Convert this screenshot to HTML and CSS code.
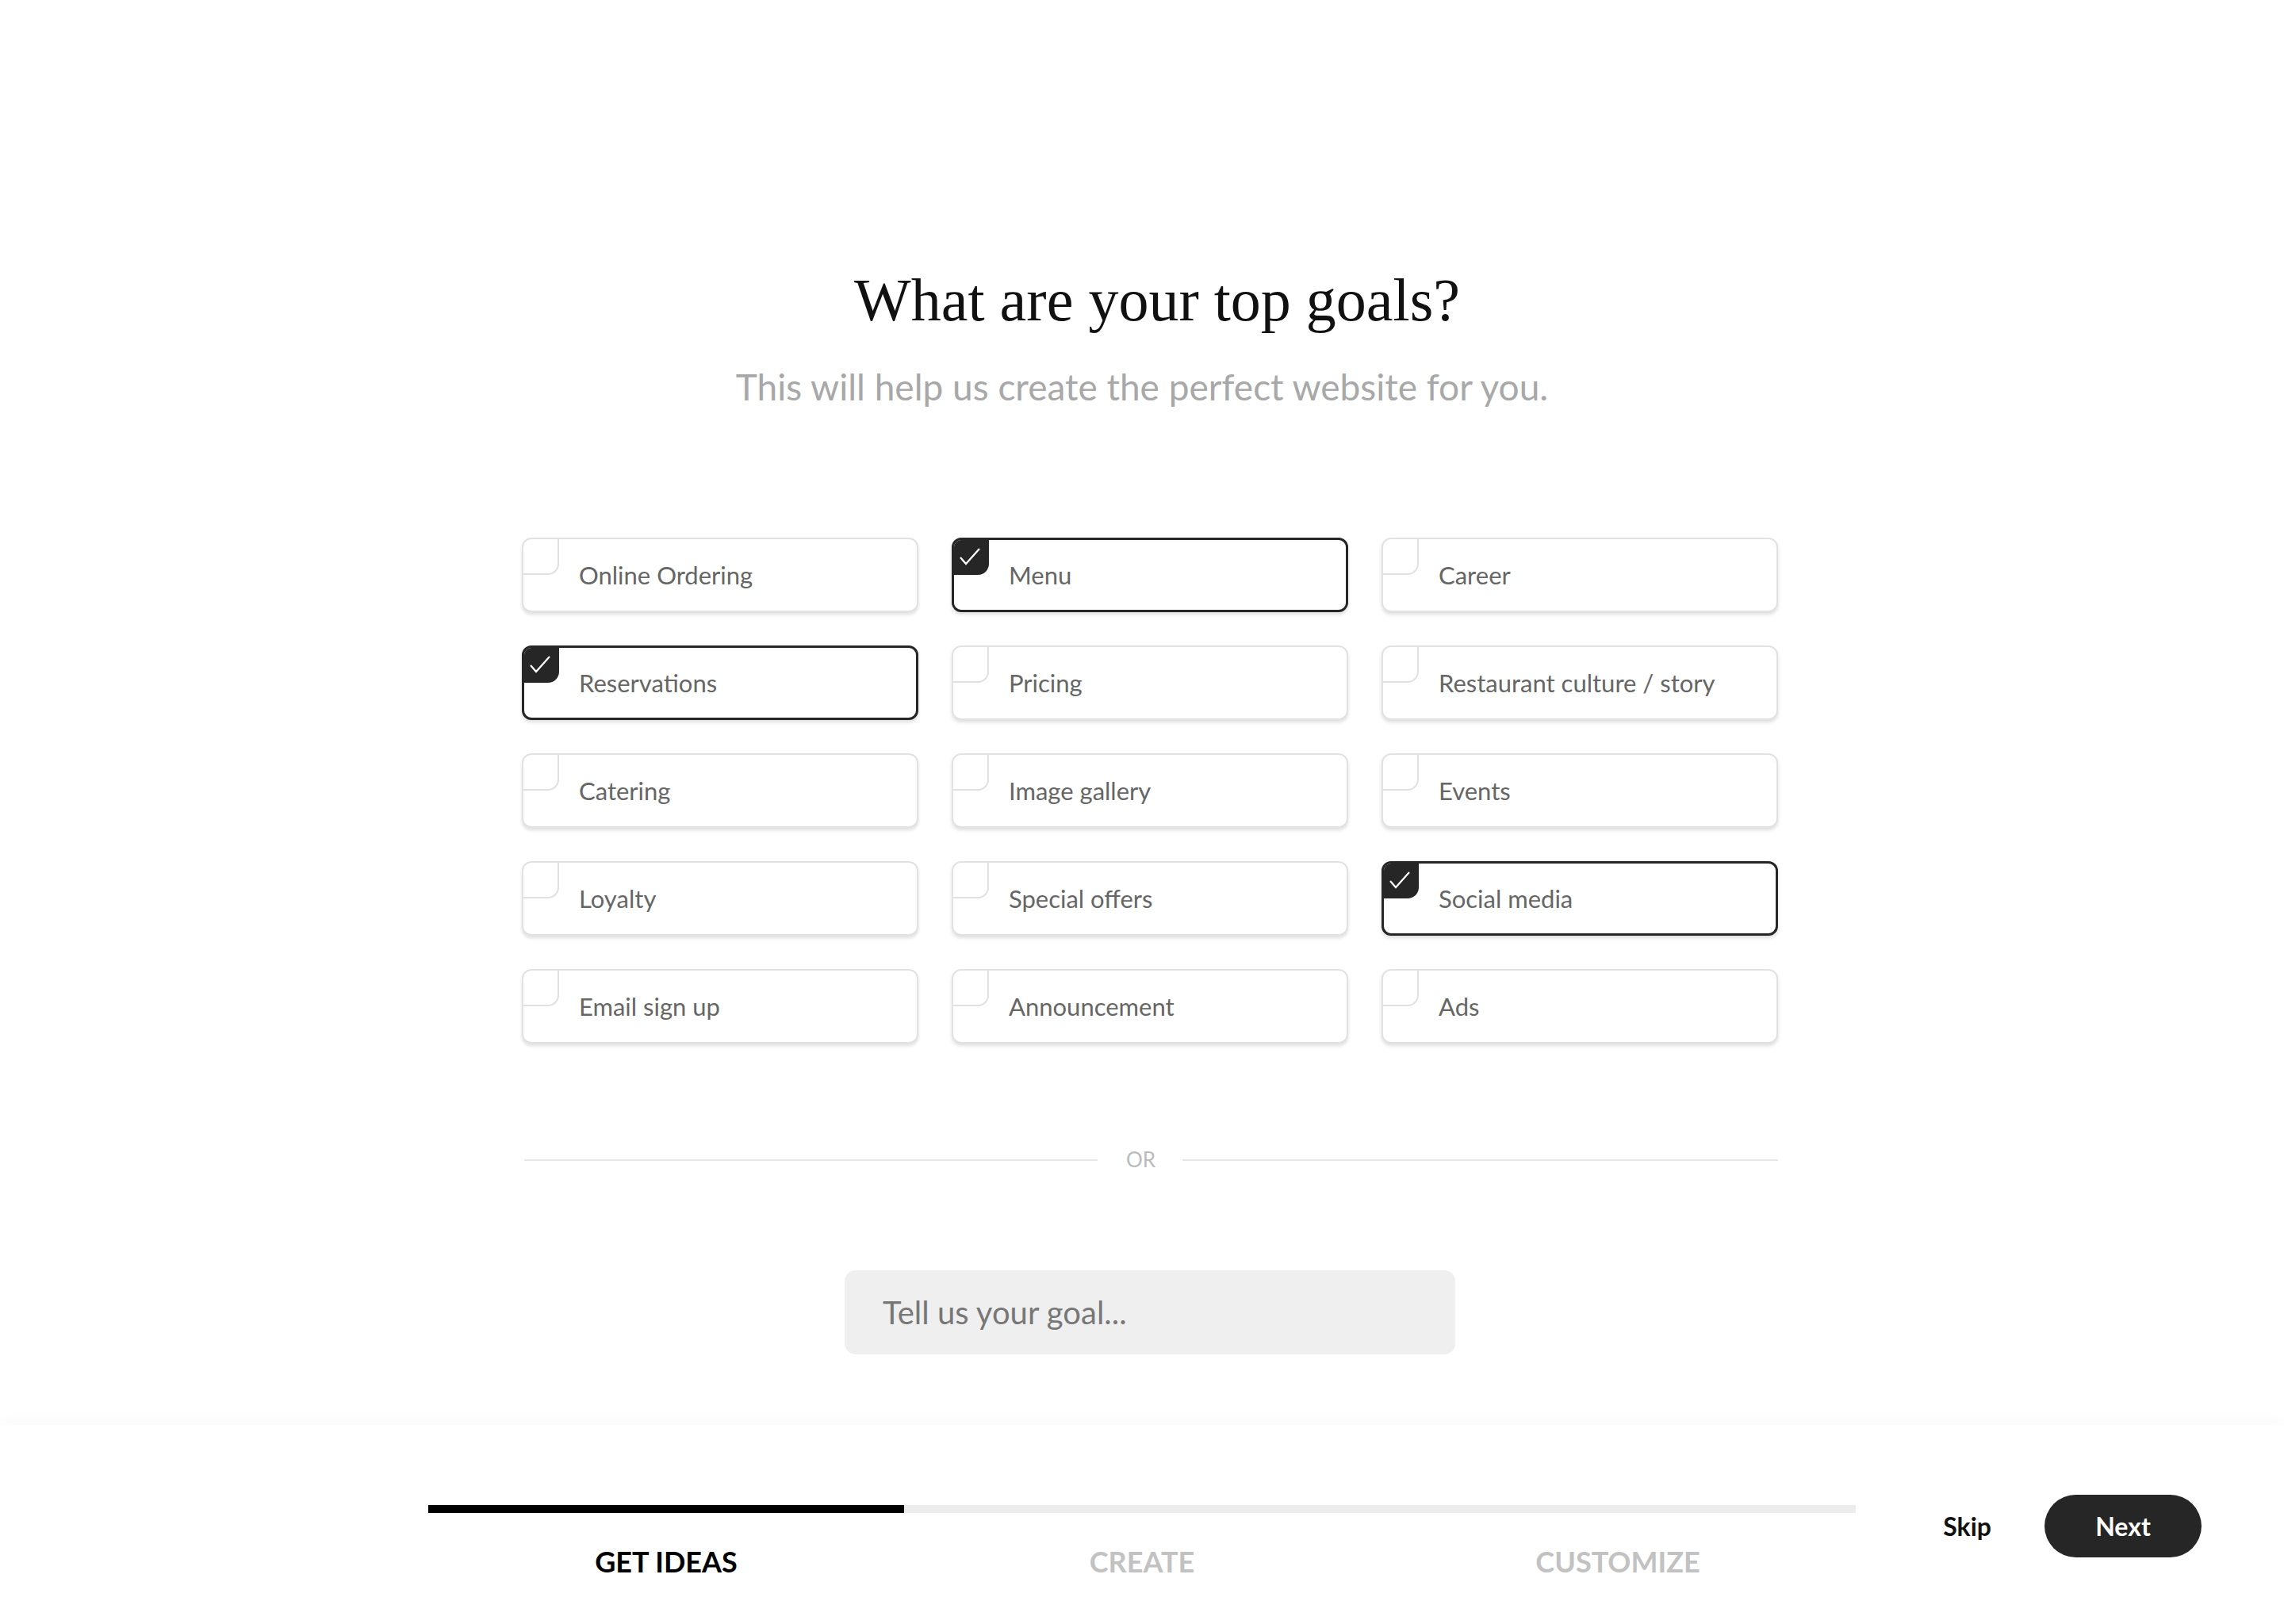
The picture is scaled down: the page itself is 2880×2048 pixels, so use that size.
FILE: index.html
```html
<!DOCTYPE html>
<html lang="en">
<head>
  <meta charset="UTF-8" />
  <meta name="viewport" content="width=device-width, initial-scale=1.0"/>
  <title>Top goals</title>
  <link rel="stylesheet" href="styles.css" />
</head>
<body>
  <main class="goals-page">
    <h1 class="goals-title">What are your top goals?</h1>
    <p class="goals-subtitle">This will help us create the perfect website for you.</p>

    <div class="goals-wrap">
      <div class="goals-grid">
        <label class="goal-card"><span class="goal-check"></span><span class="goal-label">Online Ordering</span></label>
        <label class="goal-card is-checked"><span class="goal-check"><svg viewBox="0 0 44 44"><path d="M8 22 L15 30 L32 11" /></svg></span><span class="goal-label">Menu</span></label>
        <label class="goal-card"><span class="goal-check"></span><span class="goal-label">Career</span></label>

        <label class="goal-card is-checked"><span class="goal-check"><svg viewBox="0 0 44 44"><path d="M8 22 L15 30 L32 11" /></svg></span><span class="goal-label">Reservations</span></label>
        <label class="goal-card"><span class="goal-check"></span><span class="goal-label">Pricing</span></label>
        <label class="goal-card"><span class="goal-check"></span><span class="goal-label">Restaurant culture / story</span></label>

        <label class="goal-card"><span class="goal-check"></span><span class="goal-label">Catering</span></label>
        <label class="goal-card"><span class="goal-check"></span><span class="goal-label">Image gallery</span></label>
        <label class="goal-card"><span class="goal-check"></span><span class="goal-label">Events</span></label>

        <label class="goal-card"><span class="goal-check"></span><span class="goal-label">Loyalty</span></label>
        <label class="goal-card"><span class="goal-check"></span><span class="goal-label">Special offers</span></label>
        <label class="goal-card is-checked"><span class="goal-check"><svg viewBox="0 0 44 44"><path d="M8 22 L15 30 L32 11" /></svg></span><span class="goal-label">Social media</span></label>

        <label class="goal-card"><span class="goal-check"></span><span class="goal-label">Email sign up</span></label>
        <label class="goal-card"><span class="goal-check"></span><span class="goal-label">Announcement</span></label>
        <label class="goal-card"><span class="goal-check"></span><span class="goal-label">Ads</span></label>
      </div>

      <div class="or-divider">
        <span class="or-line or-line-left"></span>
        <span class="or-text">OR</span>
        <span class="or-line"></span>
      </div>

      <input class="goal-input" type="text" placeholder="Tell us your goal..." />
    </div>
  </main>

  <footer class="steps-footer">
    <div></div>
    <div class="steps">
      <div class="steps-track"><div class="steps-fill"></div></div>
      <div class="steps-labels">
        <span class="step is-active">GET IDEAS</span>
        <span class="step">CREATE</span>
        <span class="step">CUSTOMIZE</span>
      </div>
    </div>
    <div class="steps-actions">
      <button type="button" class="skip-btn">Skip</button>
      <button type="button" class="next-btn">Next</button>
    </div>
  </footer>
</body>
</html>
```

FILE: styles.css
```css
/* Page */
body {
  margin: 0;
  min-height: 100vh;
  display: flex;
  flex-direction: column;
  font-family: Lato, "Noto Sans", sans-serif;
  background: #fff;
  color: #222;
}

.goals-page {
  flex: 1;
  padding-top: 333px;
  text-align: center;
}

.goals-title {
  margin: 0;
  padding-left: 38px; /* the heading sits a little right of centre */
  font-family: "Liberation Serif", "DejaVu Serif", serif;
  font-weight: normal;
  font-size: 76px;
  line-height: 1.2;
  color: #111;
}

.goals-subtitle {
  margin: 36px 0 0;
  font-size: 46px;
  line-height: 1.2;
  color: #a8a8a8;
}

/* Goals block (grid, divider, input) */
.goals-wrap {
  width: 1584px;
  margin: 163px 0 0 calc(50% - 782px);
}

.goals-grid {
  display: grid;
  grid-template-columns: repeat(3, 1fr);
  gap: 42px;
}

.goal-card {
  box-sizing: border-box;
  height: 94px;
  display: flex;
  align-items: flex-start;
  border: 2px solid #e2e2e2;
  border-radius: 12px;
  background: #fff;
  box-shadow: 0 3px 4px rgba(0, 0, 0, 0.13);
  text-align: left;
  cursor: pointer;
}

.goal-check {
  box-sizing: border-box;
  flex: none;
  width: 45px;
  height: 45px;
  border-right: 2px solid #e0e0e0;
  border-bottom: 2px solid #e0e0e0;
  border-radius: 10px 0 14px 0;
}

.goal-check svg {
  display: block;
  width: 44px;
  height: 44px;
  fill: none;
  stroke: #fff;
  stroke-width: 2.2;
}

.goal-label {
  align-self: center;
  margin-left: 25px;
  font-size: 31px;
  color: #666;
}

.goal-card.is-checked {
  border: 3px solid #262626;
}

.goal-card.is-checked .goal-check {
  width: 44px;
  height: 44px;
  border: none;
  background: #262626;
  border-radius: 9px 0 14px 0;
}

/* OR divider */
.or-divider {
  display: flex;
  align-items: center;
  margin-top: 131px;
}

.or-line {
  flex: 1;
  height: 2px;
  background: #e6e6e6;
}

.or-line-left {
  flex: none;
  width: 723px;
  margin-left: 3px;
}

.or-text {
  padding: 0 34px 0 36px;
  font-size: 26px;
  line-height: 1.2;
  color: #bbb;
}

/* Free text goal */
.goal-input {
  display: block;
  box-sizing: border-box;
  width: 770px;
  height: 106px;
  margin: 123px auto 0;
  padding: 0 48px;
  border: none;
  border-radius: 14px;
  background: #efefef;
  font-family: Lato, "Noto Sans", sans-serif;
  font-size: 40px;
  color: #333;
  outline: none;
}

.goal-input::placeholder {
  color: #777;
}

/* Footer with steps */
.steps-footer {
  height: 251px;
  box-sizing: border-box;
  display: grid;
  grid-template-columns: 1fr 1800px 1fr;
  align-items: start;
  padding-top: 88px;
  background: #fff;
  box-shadow: 0 -6px 18px rgba(0, 0, 0, 0.025);
}

.steps {
  margin-top: 13px;
}

.steps-track {
  height: 10px;
  background: #ececec;
}

.steps-fill {
  width: 600px;
  height: 100%;
  background: #000;
}

.steps-labels {
  display: grid;
  grid-template-columns: repeat(3, 1fr);
  margin-top: 40px;
}

.step {
  text-align: center;
  font-size: 36px;
  font-weight: bold;
  line-height: 1.2;
  color: #c2c2c2;
}

.step.is-active {
  color: #000;
}

.steps-actions {
  display: flex;
  justify-content: flex-end;
  align-items: center;
  gap: 67px;
  padding-right: 104px;
}

.skip-btn,
.next-btn {
  font-family: Lato, "Noto Sans", sans-serif;
  font-size: 32px;
  font-weight: bold;
  border: none;
  cursor: pointer;
}

.skip-btn {
  padding: 0;
  background: none;
  color: #111;
}

.next-btn {
  width: 198px;
  height: 79px;
  border-radius: 40px;
  background: #262626;
  color: #fff;
}
```
